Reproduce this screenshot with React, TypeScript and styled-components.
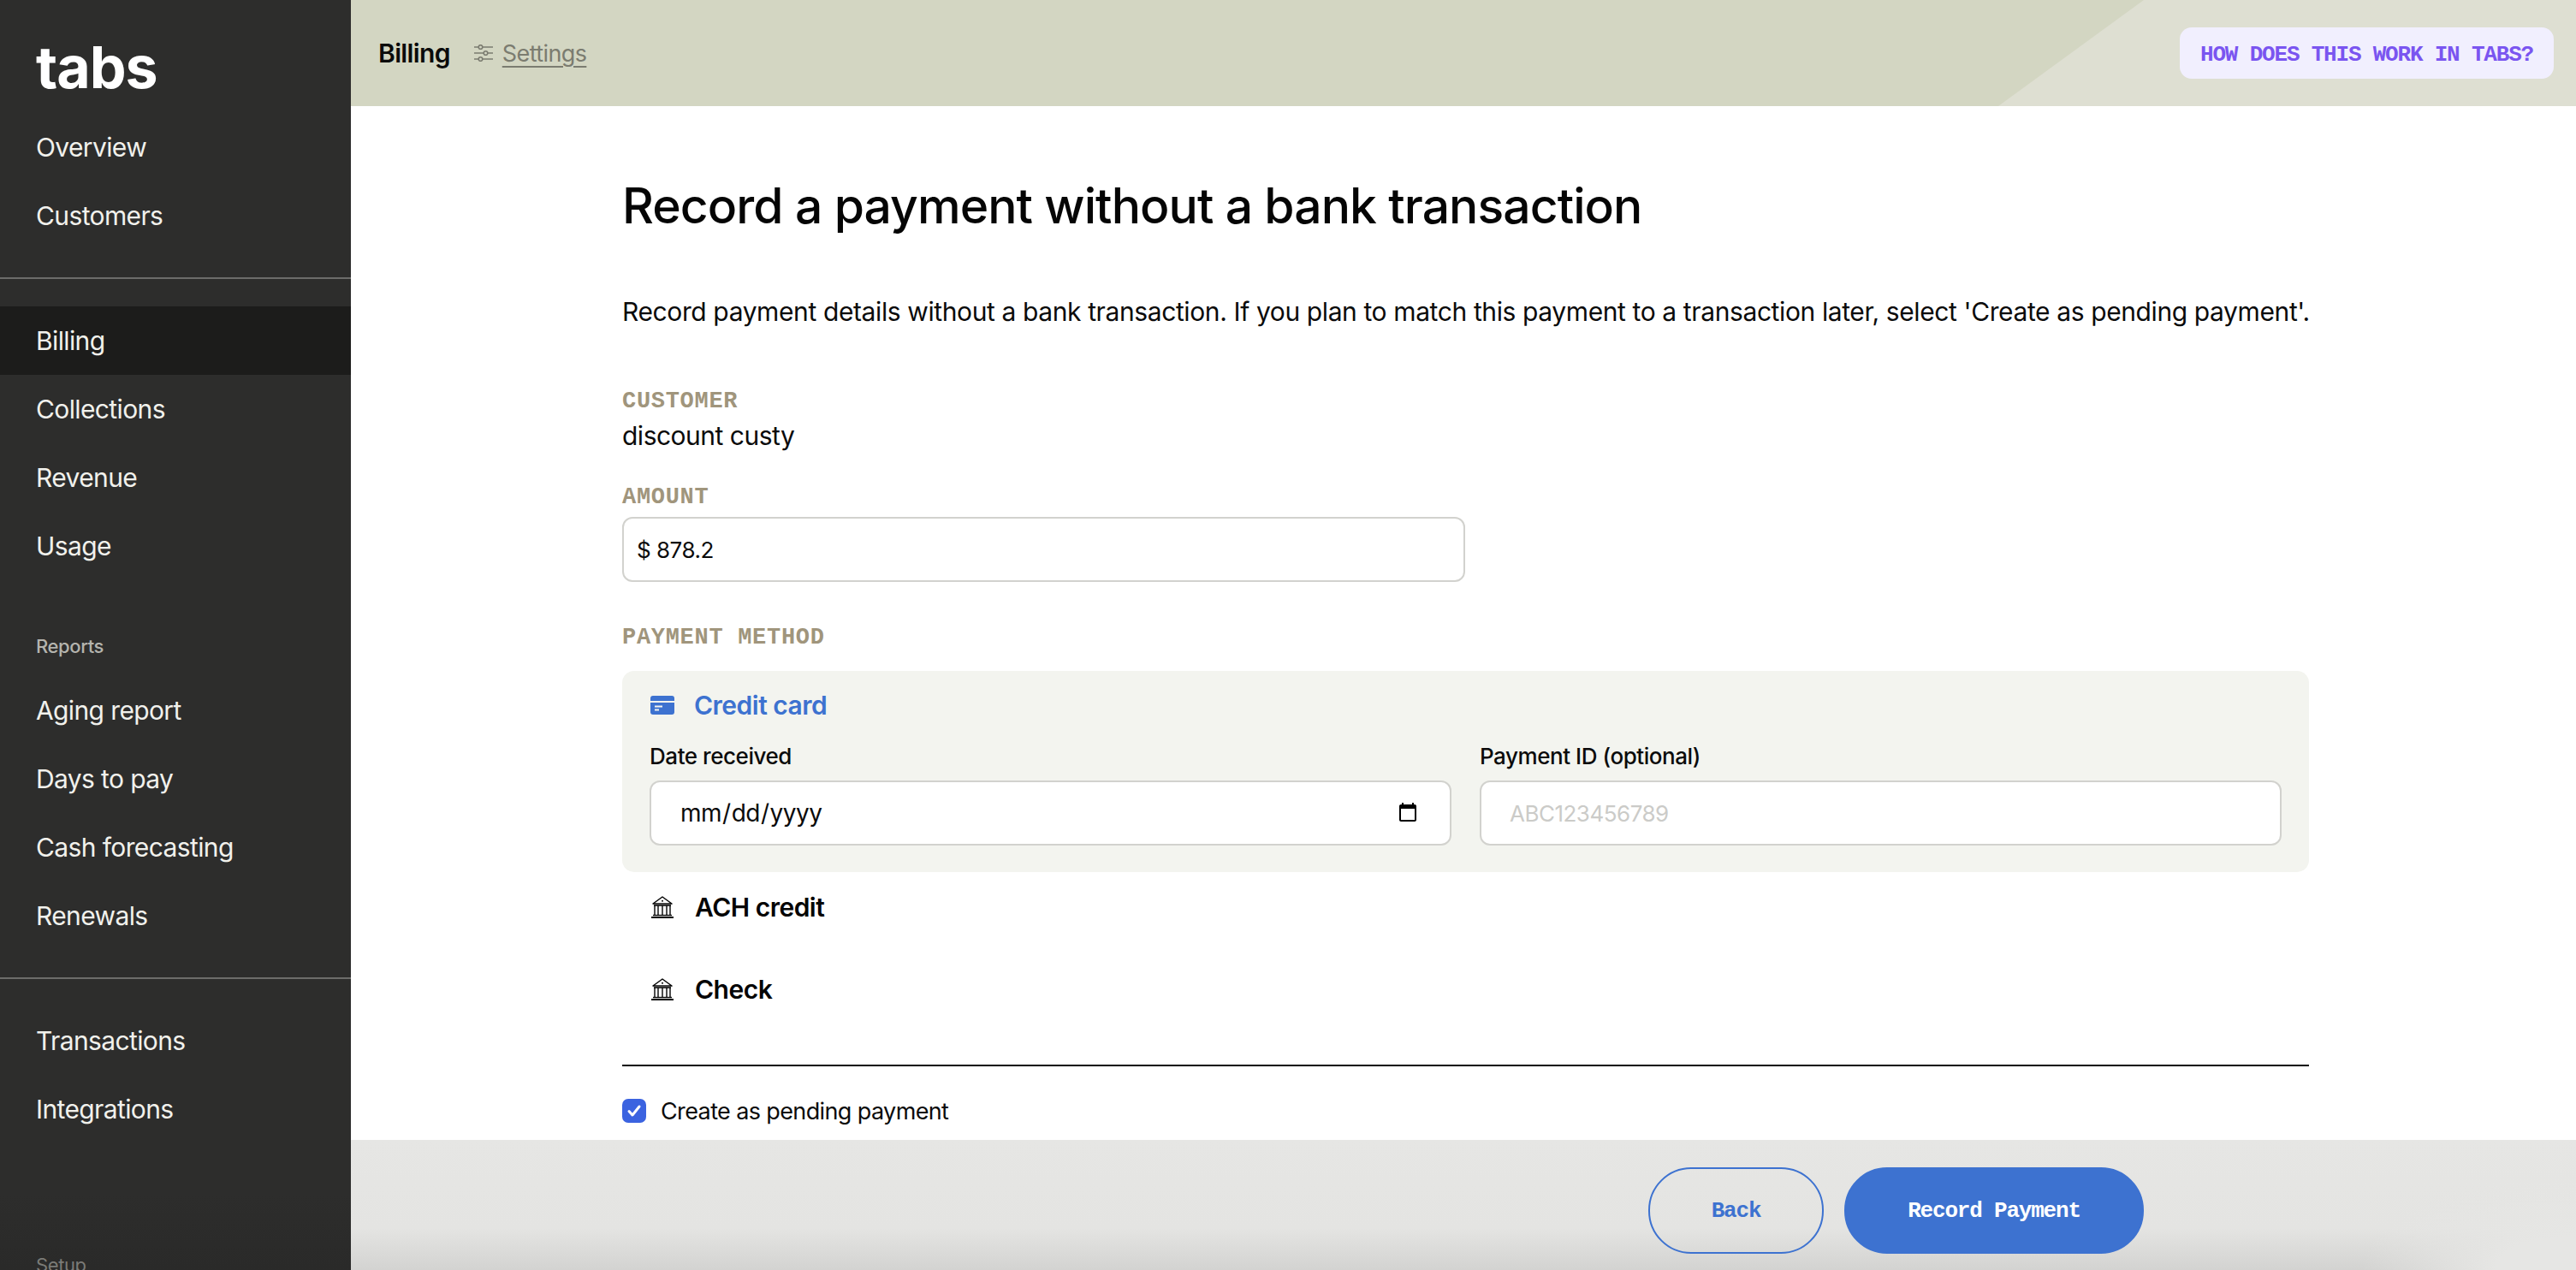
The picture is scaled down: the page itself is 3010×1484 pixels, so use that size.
import React from "react";
import styled, { createGlobalStyle } from "styled-components";

const Global = createGlobalStyle`
  * { box-sizing: border-box; }
  html, body { margin: 0; padding: 0; height: 100%; }
  body { font-family: Inter, "Liberation Sans", sans-serif; color: #0b0b0b; background: #fff; overflow: hidden; }
`;
const mono = `"Liberation Mono", "DejaVu Sans Mono", monospace`;

const Shell = styled.div`display: flex; width: 100vw; height: 100vh; overflow: hidden;`;
const Sidebar = styled.aside`
  width: 410px; flex: none; color: #f1f1ec; overflow: hidden;
  background: linear-gradient(180deg, #2d2d2c 0, #2d2d2c 94%, #2a2a29 100%);
  display: flex; flex-direction: column;
`;
const Logo = styled.div`
  height: 132px; flex: none; padding: 38px 0 0 42px; font-size: 68px; line-height: 80px; font-weight: 700; letter-spacing: -1px; color: #fff;
`;
const NavItem = styled.div<{ $active?: boolean }>`
  height: 80px; flex: none; display: flex; align-items: center; padding-left: 42px;
  font-size: 30px; letter-spacing: -0.62px;
  background: ${(p) => (p.$active ? "#1c1c1b" : "transparent")};
`;
const NavRule = styled.div`height: 2px; flex: none; background: #6c6c6a; margin: 32px 0;`;
const NavHeading = styled.div<{ $top: number; $dim?: boolean }>`
  height: 30px; flex: none; line-height: 30px; padding-left: 42px; margin-top: ${(p) => p.$top}px; margin-bottom: 20px;
  font-size: 22px; font-weight: ${(p) => (p.$dim ? 400 : 500)}; letter-spacing: -0.4px;
  color: ${(p) => (p.$dim ? "#7b7b77" : "#b4b4ae")};
`;
const Main = styled.div`flex: 1; min-width: 0; display: flex; flex-direction: column;`;
const Header = styled.header`
  height: 124px; flex: none; display: flex; align-items: center; padding: 0 26px 0 32px; position: relative; overflow: hidden;
  background: #d3d6c2;
`;
const HeaderWedge = styled.div`
  position: absolute; top: 0; right: 0; bottom: 0; width: 675px; background: #dedfd2;
  clip-path: polygon(170px 0, 100% 0, 100% 100%, 0 100%);
`;
const HeaderTitle = styled.div`font-size: 30px; font-weight: 600; letter-spacing: -0.65px; position: relative;`;
const SettingsLink = styled.a`
  display: flex; align-items: center; gap: 11px; margin-left: 28px; color: #7b7c70; font-size: 27px; letter-spacing: -0.6px; position: relative;
  span { text-decoration: underline; text-underline-offset: 5px; text-decoration-thickness: 2px; }
`;
const HelpButton = styled.button`
  margin-left: auto; position: relative; height: 60px; width: 437px; border: 0; border-radius: 14px; background: #f1effe;
  color: #7a55f0; font-family: ${mono}; font-weight: 700; font-size: 26px; letter-spacing: -1.2px; padding: 4px 0 0;
`;
const Body = styled.div`flex: 1; min-height: 0; overflow: hidden; padding: 86px 0 0 317px;`;
const Column = styled.div`width: 1971px;`;
const Title = styled.h1`
  margin: 0; font-size: 57px; line-height: 62px; font-weight: 500; letter-spacing: -0.92px; color: #050505; white-space: nowrap;
`;
const Intro = styled.p`margin: 72px 0 0; font-size: 30px; line-height: 40px; letter-spacing: -0.39px; white-space: nowrap;`;
const FieldLabel = styled.div<{ $top: number }>`
  margin-top: ${(p) => p.$top}px; height: 30px; line-height: 34px; font-family: ${mono}; font-size: 27px; font-weight: 700;
  letter-spacing: 0.7px; color: #a0957c; white-space: pre;
`;
const Value = styled.div`margin-top: 10px; font-size: 30px; line-height: 34px; padding-bottom: 2px; letter-spacing: -0.5px;`;
const TextInput = styled.input<{ $pad?: number; $size?: number }>`
  display: block; width: 100%; height: 76px; border: 2px solid #d2d2ce; border-radius: 12px; background: #fff;
  font-family: Inter, sans-serif; font-size: ${(p) => p.$size ?? 28}px; letter-spacing: -0.5px; color: #0b0b0b; padding: 0 ${(p) => p.$pad ?? 33}px; outline: none;
  &::placeholder { color: #cbcbc8; }
  &::-webkit-calendar-picker-indicator { width: 26px; height: 26px; padding: 0; margin: 0 3px 0 0; }
`;
const AmountWrap = styled.div`margin-top: 10px; width: 985px;`;
const Card = styled.section`
  margin-top: 26px; height: 235px; padding: 20px 32px 0; border-radius: 14px; background: #f3f4ef;
`;
const MethodRow = styled.div<{ $active?: boolean }>`
  display: flex; align-items: center; height: 40px; font-size: 30px; font-weight: 600; letter-spacing: -0.5px;
  color: ${(p) => (p.$active ? "#3d72d0" : "#050505")};
`;
const MethodIcon = styled.span<{ $inset?: number }>`
  width: ${(p) => 51 + (p.$inset ?? 0)}px; padding-left: ${(p) => p.$inset ?? 0}px; flex: none; display: flex; align-items: center;
`;
const PlainMethod = styled.div`padding: 21px 34px 35px;`;
const FieldsGrid = styled.div`display: grid; grid-template-columns: 1fr 1fr; column-gap: 33px; margin-top: 25px;`;
const SmallLabel = styled.div`height: 30px; line-height: 30px; font-size: 26px; font-weight: 500; letter-spacing: -0.45px; margin-bottom: 13px;`;
const Rule = styled.div`height: 2px; background: #050505; margin-top: 33px;`;
const CheckRow = styled.label`display: flex; align-items: center; gap: 17px; height: 28px; margin-top: 38px; font-size: 27px; letter-spacing: -0.62px;`;
const CheckBox = styled.span`
  width: 28px; height: 28px; border-radius: 7px; background: #3b63e0; display: flex; align-items: center; justify-content: center;
`;
const Footer = styled.footer`
  height: 152px; flex: none; display: flex; justify-content: flex-end; gap: 24px; padding: 32px 505px 0 0;
  background:
    radial-gradient(ellipse 240px 110px at 2590px 100%, #e6e6e4 0, #e6e6e4 35%, rgba(230, 230, 228, 0) 100%),
    linear-gradient(180deg, #e6e6e4 0, #e4e4e2 68%, #d3d3d1 100%);
`;
const Pill = styled.button<{ $solid?: boolean }>`
  height: 101px; width: ${(p) => (p.$solid ? 350 : 205)}px; border-radius: 50px; font-family: ${mono}; font-size: 26px; letter-spacing: -1.2px; font-weight: 700; padding: 0;
  border: 2px solid #3d72d0; background: ${(p) => (p.$solid ? "#3d72d0" : "transparent")}; color: ${(p) => (p.$solid ? "#fff" : "#3d72d0")};
`;

const Sliders = () => (
  <svg width="22" height="20" viewBox="0 0 22 20" fill="none" stroke="#7b7c70" strokeWidth="1.6">
    <path d="M0 3h5M10 3h12M0 10h11M16 10h6M0 17h5M10 17h12" />
    <circle cx="7.5" cy="3" r="2.3" /><circle cx="13.5" cy="10" r="2.3" /><circle cx="7.5" cy="17" r="2.3" />
  </svg>
);
const Card28 = () => (
  <svg width="28" height="22" viewBox="0 0 28 22" fill="#3d72d0">
    <path d="M3 0h22a3 3 0 0 1 3 3v3H0V3a3 3 0 0 1 3-3z" />
    <path d="M0 8h28v11a3 3 0 0 1-3 3H3a3 3 0 0 1-3-3z" />
    <path d="M5 11.5h9v2H5zM5 15.5h5v2H5z" fill="#f3f4ef" />
  </svg>
);
const Bank = () => (
  <svg width="26" height="26" viewBox="0 0 26 26" fill="none" stroke="#050505" strokeWidth="1.5">
    <path d="M2 9 13 1l11 8z" strokeLinejoin="round" />
    <circle cx="13" cy="5.8" r="1" fill="#050505" stroke="none" />
    <path d="M3 11h20" strokeWidth="1.6" />
    <path d="M4 11v11M8 11v11M13 11v11M18 11v11M22 11v11" strokeWidth="1.4" />
    <path d="M2 22.5h22" strokeWidth="1.4" />
    <path d="M0 25h26" strokeWidth="2" />
  </svg>
);

export default function App() {
  return (
    <Shell>
      <Global />
      <Sidebar>
        <Logo>tabs</Logo>
        <NavItem>Overview</NavItem>
        <NavItem>Customers</NavItem>
        <NavRule />
        <NavItem $active>Billing</NavItem>
        <NavItem>Collections</NavItem>
        <NavItem>Revenue</NavItem>
        <NavItem>Usage</NavItem>
        <NavHeading $top={62}>Reports</NavHeading>
        <NavItem>Aging report</NavItem>
        <NavItem>Days to pay</NavItem>
        <NavItem>Cash forecasting</NavItem>
        <NavItem>Renewals</NavItem>
        <NavRule />
        <NavItem>Transactions</NavItem>
        <NavItem>Integrations</NavItem>
        <NavHeading $top={127} $dim>Setup</NavHeading>
      </Sidebar>
      <Main>
        <Header>
          <HeaderWedge />
          <HeaderTitle>Billing</HeaderTitle>
          <SettingsLink><Sliders /><span>Settings</span></SettingsLink>
          <HelpButton>HOW DOES THIS WORK IN TABS?</HelpButton>
        </Header>
        <Body>
          <Column>
            <Title>Record a payment without a bank transaction</Title>
            <Intro>Record payment details without a bank transaction. If you plan to match this payment to a transaction later, select 'Create as pending payment'.</Intro>
            <FieldLabel $top={68}>CUSTOMER</FieldLabel>
            <Value>discount custy</Value>
            <FieldLabel $top={36}>AMOUNT</FieldLabel>
            <AmountWrap><TextInput $pad={15} $size={26} readOnly value="$ 878.2" /></AmountWrap>
            <FieldLabel $top={48}>PAYMENT METHOD</FieldLabel>
            <Card>
              <MethodRow $active>
                <MethodIcon $inset={1}><Card28 /></MethodIcon>
                Credit card
              </MethodRow>
              <FieldsGrid>
                <div>
                  <SmallLabel>Date received</SmallLabel>
                  <TextInput type="date" />
                </div>
                <div>
                  <SmallLabel>Payment ID (optional)</SmallLabel>
                  <TextInput $size={26} placeholder="ABC123456789" />
                </div>
              </FieldsGrid>
            </Card>
            <PlainMethod><MethodRow><MethodIcon><Bank /></MethodIcon>ACH credit</MethodRow></PlainMethod>
            <PlainMethod><MethodRow><MethodIcon><Bank /></MethodIcon>Check</MethodRow></PlainMethod>
            <Rule />
            <CheckRow>
              <CheckBox>
                <svg width="18" height="18" viewBox="0 0 18 18" fill="none" stroke="#fff" strokeWidth="3" strokeLinecap="round" strokeLinejoin="round"><path d="M3 9.5 7 14l8-10" /></svg>
              </CheckBox>
              Create as pending payment
            </CheckRow>
          </Column>
        </Body>
        <Footer>
          <Pill>Back</Pill>
          <Pill $solid>Record Payment</Pill>
        </Footer>
      </Main>
    </Shell>
  );
}
